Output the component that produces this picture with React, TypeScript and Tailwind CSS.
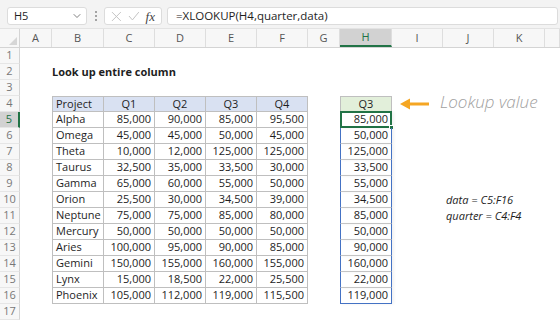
import { ChevronDown } from "lucide-react";

const W = [
  "w-[32px]",
  "w-[52px]",
  "w-[51px]",
  "w-[51px]",
  "w-[51px]",
  "w-[51px]",
  "w-[32px]",
  "w-[52px]",
  "w-[51px]",
  "w-[51px]",
  "w-[51px]",
  "flex-1",
];
const LETTERS = ["A", "B", "C", "D", "E", "F", "G", "H", "I", "J", "K", ""];

const data: [string, string, string, string, string][] = [
  ["Alpha", "85,000", "90,000", "85,000", "95,500"],
  ["Omega", "45,000", "45,000", "50,000", "45,000"],
  ["Theta", "10,000", "12,000", "125,000", "125,000"],
  ["Taurus", "32,500", "35,000", "33,500", "30,000"],
  ["Gamma", "65,000", "60,000", "55,000", "50,000"],
  ["Orion", "25,500", "30,000", "34,500", "39,000"],
  ["Neptune", "75,000", "75,000", "85,000", "80,000"],
  ["Mercury", "50,000", "50,000", "50,000", "50,000"],
  ["Aries", "100,000", "95,000", "90,000", "85,000"],
  ["Gemini", "150,000", "155,000", "160,000", "155,000"],
  ["Lynx", "15,000", "18,500", "22,000", "25,500"],
  ["Phoenix", "105,000", "112,000", "119,000", "115,500"],
];
const heads = ["Project", "Q1", "Q2", "Q3", "Q4"];

function Cell({ r, c }: { r: number; c: number }) {
  const w = W[c];
  // table B4:F16
  if (r >= 4 && r <= 16 && c >= 1 && c <= 5) {
    const first = c === 1 ? "border-l" : "";
    if (r === 4) {
      return (
        <div
          className={`${w} shrink-0 flex items-center border-t border-r border-b border-[#bfbfbf] bg-[#d9e1f2] ${first} ${
            c === 1 ? "pl-[3px]" : "justify-center"
          }`}
        >
          {heads[c - 1]}
        </div>
      );
    }
    const v = data[r - 5][c - 1];
    return (
      <div
        className={`${w} shrink-0 flex items-center border-r border-b border-[#bfbfbf] ${first} ${
          c === 1 ? "pl-[3px]" : "justify-end pr-[3px]"
        }`}
      >
        {v}
      </div>
    );
  }
  // result column H
  if (c === 7 && r === 4) {
    return (
      <div className={`${w} shrink-0 flex items-center justify-center border border-[#bfbfbf] bg-[#e2efda]`}>
        Q3
      </div>
    );
  }
  if (c === 7 && r >= 5 && r <= 16) {
    return (
      <div
        className={`${w} shrink-0 relative flex items-center justify-end pr-[3px] border-x border-b border-x-[#4472c4] shadow-[2px_0_3px_rgba(0,0,0,0.06)] ${
          r === 16 ? "border-b-[#4472c4]" : "border-b-[#c8c8c8]"
        }`}
      >
        {data[r - 5][3]}
        {r === 5 && (
          <>
            <div className="absolute -left-[1px] -right-[1px] -top-[1px] -bottom-[1px] border-2 border-[#217346]" />
            <div className="absolute -right-[3px] -bottom-[3px] w-[5px] h-[5px] bg-[#217346] border border-white" />
          </>
        )}
      </div>
    );
  }
  if (r === 2 && c === 1) {
    return (
      <div className={`${w} shrink-0 flex items-center font-bold whitespace-nowrap overflow-visible`}>
        Look up entire column
      </div>
    );
  }
  if (r === 4 && c === 8) {
    return (
      <div className={`${w} shrink-0 flex items-center whitespace-nowrap overflow-visible`}>
        <svg width="29" height="12" viewBox="0 0 29 12" className="ml-[8px] shrink-0">
          <polygon points="0,6 10,0.5 10,11.5" fill="#f5a623" />
          <rect x="9" y="4.5" width="20" height="3" fill="#f5a623" />
        </svg>
        <span className="ml-[11px] -mt-[5px] italic font-light text-[17px] text-[#a0a0a0] font-['Open_Sans',sans-serif]">
          Lookup value
        </span>
      </div>
    );
  }
  if ((r === 10 || r === 11) && c === 9) {
    return (
      <div className={`${w} shrink-0 flex items-center pl-[3px] italic whitespace-nowrap overflow-visible`}>
        {r === 10 ? "data = C5:F16" : "quarter = C4:F4"}
      </div>
    );
  }
  return <div className={`${w} shrink-0`} />;
}

export default function App() {
  const rows = Array.from({ length: 17 }, (_, i) => i + 1);
  return (
    <div className="w-[560px] h-[320px] overflow-hidden bg-white text-[11px] text-[#1e1e1e] font-['Open_Sans','Liberation_Sans',sans-serif]">
      {/* formula bar */}
      <div className="h-[29px] flex items-start pt-[7px] bg-[#f3f3f3] border-b border-[#e3e3e3]">
        <div className="ml-[7px] w-[80px] h-[18px] flex items-center justify-between pl-[6px] pr-[3px] bg-white border border-[#dcdcdc] rounded-[3px]">
          <span>H5</span>
          <ChevronDown size={12} strokeWidth={1.5} className="text-[#555]" />
        </div>
        <div className="w-[17px] h-[18px] flex flex-col items-center justify-center gap-[2px]">
          <span className="w-[2px] h-[2px] bg-[#888] rounded-full" />
          <span className="w-[2px] h-[2px] bg-[#888] rounded-full" />
          <span className="w-[2px] h-[2px] bg-[#888] rounded-full" />
        </div>
        <div className="w-[58px] h-[18px] flex items-center gap-[6px] px-[6px] bg-white border border-[#dcdcdc] rounded-[3px]">
          <svg width="11" height="11" viewBox="0 0 11 11">
            <path d="M1 1 L10 10 M10 1 L1 10" stroke="#c3c3c3" strokeWidth="1" />
          </svg>
          <svg width="12" height="10" viewBox="0 0 12 10">
            <path d="M1 5 L4.5 9 L11 1" stroke="#c3c3c3" strokeWidth="1" fill="none" />
          </svg>
          <span className="italic text-[13px] leading-none text-[#444] font-['Liberation_Serif',serif]">fx</span>
        </div>
        <div className="ml-[5px] w-[391px] h-[18px] flex items-center pl-[8px] bg-white border border-[#dcdcdc] rounded-[3px] text-[11.5px]">
          =XLOOKUP(H4,quarter,data)
        </div>
      </div>

      {/* column headers */}
      <div className="h-[19px] flex border-b border-[#d4d4d4] bg-[#f7f7f7] text-[#555]">
        <div className="w-[20px] shrink-0 relative border-r border-[#d4d4d4]">
          <svg width="8" height="8" viewBox="0 0 8 8" className="absolute right-[2px] bottom-[2px]">
            <polygon points="8,0 8,8 0,8" fill="#d6d6d6" />
          </svg>
        </div>
        {LETTERS.map((l, i) => (
          <div
            key={i}
            className={`${W[i]} shrink-0 flex items-center justify-center border-r border-[#dedede] ${
              l === "H" ? "bg-[#d2d2d2] text-[#217346] border-b-2 border-b-[#217346]" : ""
            }`}
          >
            {l}
          </div>
        ))}
      </div>

      {/* grid rows */}
      {rows.map((r) => (
        <div key={r} className="h-4 flex">
          <div
            className={`w-[20px] shrink-0 flex items-center justify-center border-b border-[#e6e6e6] ${
              r === 5
                ? "bg-[#d2d2d2] text-[#217346] border-r-2 border-r-[#217346]"
                : "bg-[#f7f7f7] text-[#777] border-r border-r-[#d4d4d4]"
            }`}
          >
            {r}
          </div>
          {W.map((_, c) => (
            <Cell key={c} r={r} c={c} />
          ))}
        </div>
      ))}
    </div>
  );
}
